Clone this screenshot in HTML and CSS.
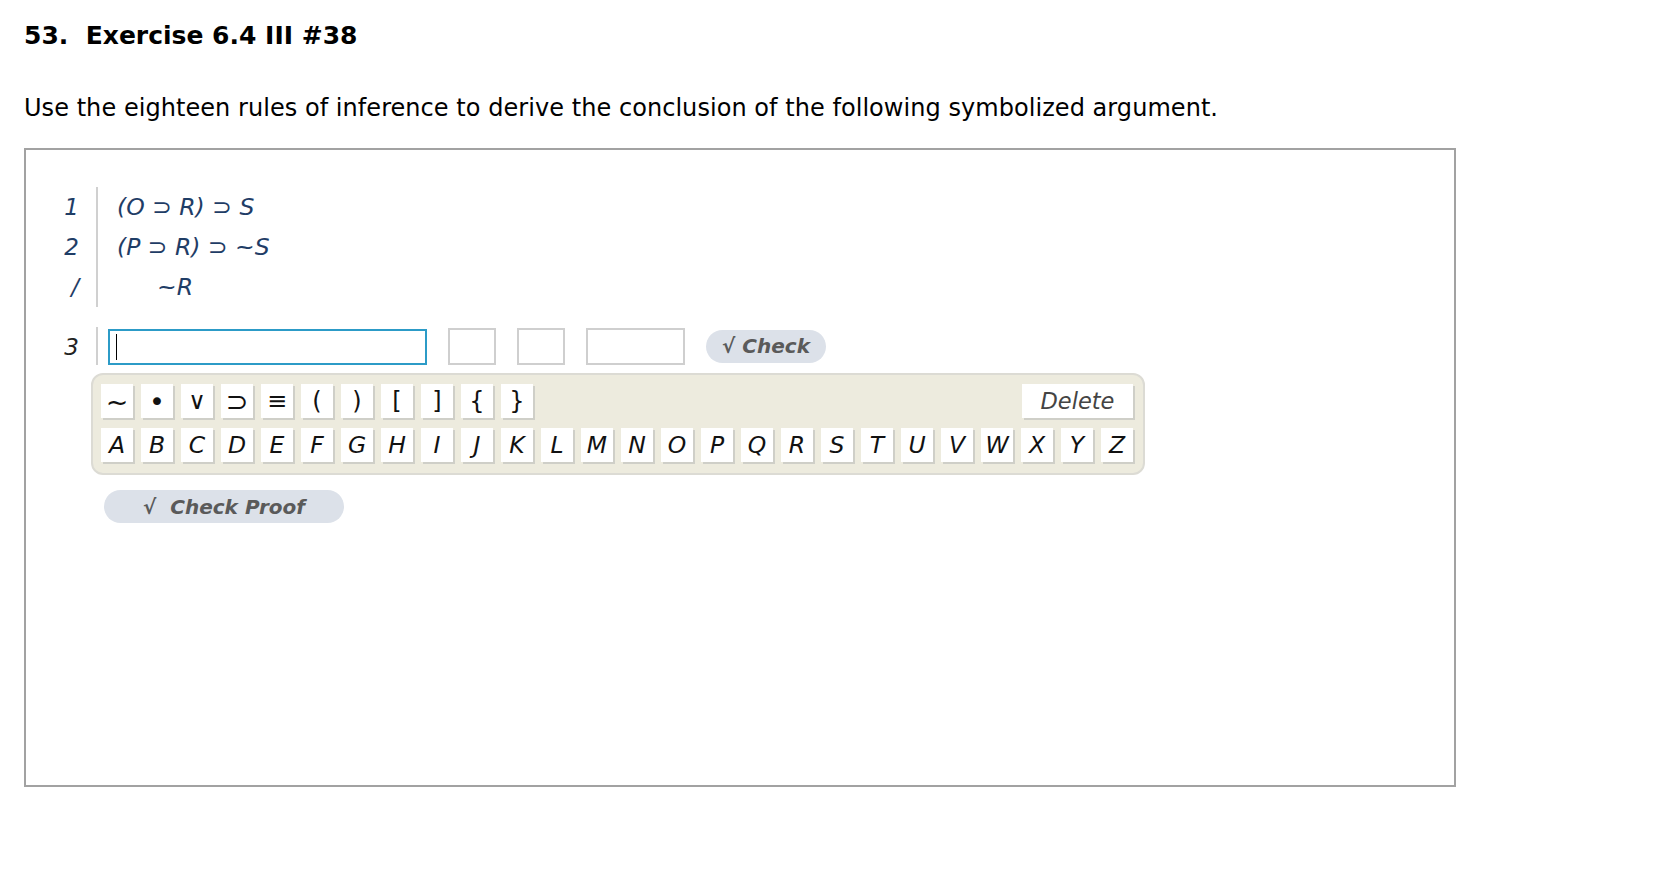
FILE: index.html
```html
<!DOCTYPE html>
<html lang="en">
<head>
<meta charset="utf-8">
<title>Exercise 6.4 III #38</title>
<link rel="stylesheet" href="styles.css">
</head>
<body>
<h1 class="title">53.&nbsp; Exercise 6.4 III #38</h1>
<p class="prompt">Use the eighteen rules of inference to derive the conclusion of the following symbolized argument.</p>
<div class="panel">
  <div class="proof">
    <div class="row premise"><div class="num">1</div><div class="line">(O ⊃ R) ⊃ S</div></div>
    <div class="row premise"><div class="num">2</div><div class="line">(P ⊃ R) ⊃ ~S</div></div>
    <div class="row premise"><div class="num">/</div><div class="line"><span class="concl">~R</span></div></div>
  </div>
  <div class="row step">
    <div class="num dark">3</div>
    <div class="line entry">
      <div class="field"><span class="caret"></span></div>
      <div class="box small"></div>
      <div class="box small"></div>
      <div class="box wide"></div>
      <button class="pill check">√ Check</button>
    </div>
  </div>
  <div class="keyboard">
    <div class="krow">
      <span class="key sym big">~</span><span class="key sym big">•</span><span class="key sym">∨</span><span class="key sym big">⊃</span><span class="key sym">≡</span><span class="key sym">(</span><span class="key sym">)</span><span class="key sym">[</span><span class="key sym">]</span><span class="key sym">{</span><span class="key sym">}</span>
      <span class="key del">Delete</span>
    </div>
    <div class="krow">
      <span class="key">A</span><span class="key">B</span><span class="key">C</span><span class="key">D</span><span class="key">E</span><span class="key">F</span><span class="key">G</span><span class="key">H</span><span class="key">I</span><span class="key">J</span><span class="key">K</span><span class="key">L</span><span class="key">M</span><span class="key">N</span><span class="key">O</span><span class="key">P</span><span class="key">Q</span><span class="key">R</span><span class="key">S</span><span class="key">T</span><span class="key">U</span><span class="key">V</span><span class="key">W</span><span class="key">X</span><span class="key">Y</span><span class="key">Z</span>
    </div>
  </div>
  <button class="pill proofbtn">√&nbsp; Check Proof</button>
</div>
</body>
</html>
```
FILE: styles.css
```css
html, body {
  margin: 0;
  padding: 0;
  background: #fff;
}
body {
  padding: 21px 24px 0 24px;
  font-family: "DejaVu Sans", Verdana, sans-serif;
  color: #000;
}
.title {
  margin: 0;
  font-size: 25px;
  line-height: 30px;
  font-weight: bold;
}
.prompt {
  margin: 42px 0 0 0;
  font-size: 24px;
  line-height: 30px;
  letter-spacing: 0.05px;
}
.panel {
  margin-top: 25px;
  width: 1432px;
  height: 639px;
  box-sizing: border-box;
  border: 2px solid #a2a2a2;
  padding-top: 37px;
}
.row {
  display: flex;
}
.num {
  width: 53px;
  margin-right: 17px;
  text-align: right;
  font-style: italic;
  font-size: 23px;
  color: #1f3d66;
}
.num.dark {
  color: #222;
}
.line {
  border-left: 2px solid #d0d0d0;
  padding-left: 19px;
  font-style: italic;
  font-size: 23.5px;
  color: #1f3d66;
}
.premise .num,
.premise .line {
  line-height: 40px;
  height: 40px;
}
.concl {
  padding-left: 40px;
}
.step {
  margin-top: 20px;
  height: 38px;
}
.step .num {
  line-height: 40px;
}
.entry {
  display: flex;
  align-items: center;
  padding-left: 10px;
  height: 38px;
}
.field {
  width: 319px;
  height: 36px;
  box-sizing: border-box;
  border: 2px solid #2c9bc7;
  display: flex;
  align-items: center;
  padding-left: 6px;
  margin-top: 1px;
}
.caret {
  width: 1px;
  height: 26px;
  background: #000;
}
.box {
  height: 37px;
  box-sizing: border-box;
  border: 2px solid #cfcfcf;
  margin-left: 21px;
}
.box.small {
  width: 48px;
}
.box.wide {
  width: 99px;
}
.pill {
  border: none;
  border-radius: 17px;
  background: #dce1e9;
  color: #5a5a5a;
  font-family: "DejaVu Sans", Verdana, sans-serif;
  font-weight: bold;
  font-style: italic;
  font-size: 20px;
  padding: 0;
  height: 33px;
}
.check {
  width: 120px;
  margin-left: 21px;
}
.keyboard {
  margin: 8px 0 0 65px;
  width: 1054px;
  box-sizing: border-box;
  border: 2px solid #dcdbd4;
  border-radius: 12px;
  background: #edebde;
  padding: 9px 10px 11px 8px;
  display: flex;
  flex-direction: column;
  gap: 10px;
}
.krow {
  display: flex;
  gap: 8px;
}
.key {
  width: 32px;
  height: 34px;
  background: #fff;
  box-shadow: 2px 2px 0 #cfcfc8;
  display: flex;
  align-items: center;
  justify-content: center;
  font-size: 23.5px;
  font-style: italic;
  color: #111;
}
.key.sym {
  font-style: normal;
  font-size: 24px;
}
.key.sym.big {
  font-size: 27px;
}
.key.del {
  width: 111px;
  margin-left: auto;
  color: #444;
  font-size: 22.5px;
}
.proofbtn {
  display: block;
  margin: 15px 0 0 78px;
  width: 240px;
}
```
